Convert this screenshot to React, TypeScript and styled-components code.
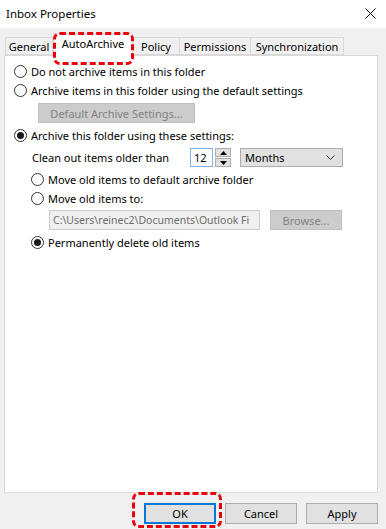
import React from 'react'
import styled, { createGlobalStyle } from 'styled-components'

const GlobalStyle = createGlobalStyle`
  html, body {
    margin: 0;
    padding: 0;
    background: #f0f0f0;
  }
  body {
    font-family: 'Noto Sans', 'Open Sans', sans-serif;
    font-size: 11px;
    color: #000;
  }
`

const tabs = [
  { label: 'General', width: 48 },
  { label: 'AutoArchive', width: 80 },
  { label: 'Policy', width: 47 },
  { label: 'Permissions', width: 71 },
  { label: 'Synchronization', width: 93 },
]

const Radio = ({ checked, label }: { checked?: boolean; label: string }) => (
  <RadioRow>
    <RadioCircle checked={checked} />
    <span>{label}</span>
  </RadioRow>
)

export default function App() {
  return (
    <Window>
      <GlobalStyle />
      <TitleBar>
        <Title>Inbox Properties</Title>
        <svg width="11" height="11" viewBox="0 0 11 11">
          <path d="M0.5 0.5 L10.5 10.5 M10.5 0.5 L0.5 10.5" stroke="#000" strokeWidth="1" />
        </svg>
      </TitleBar>

      <Body>
        <TabStrip>
          {tabs.map((t) => (
            <Tab key={t.label} width={t.width} active={t.label === 'AutoArchive'}>
              {t.label}
            </Tab>
          ))}
          <Highlight style={{ left: 49, top: -5, width: 81, height: 33 }} />
        </TabStrip>

        <Panel>
          <Radio label="Do not archive items in this folder" />
          <Radio label="Archive items in this folder using the default settings" />
          <DisabledButton>Default Archive Settings...</DisabledButton>
          <Radio checked label="Archive this folder using these settings:" />

          <Indent>
            <CleanRow>
              <CleanLabel>Clean out items older than</CleanLabel>
              <Spin>
                <SpinInput>12</SpinInput>
                <SpinButtons>
                  <SpinButton>
                    <svg width="7" height="4" viewBox="0 0 7 4">
                      <path d="M0 4 L3.5 0 L7 4 Z" fill="#000" />
                    </svg>
                  </SpinButton>
                  <SpinButton>
                    <svg width="7" height="4" viewBox="0 0 7 4">
                      <path d="M0 0 L3.5 4 L7 0 Z" fill="#000" />
                    </svg>
                  </SpinButton>
                </SpinButtons>
              </Spin>
              <Select>
                <span>Months</span>
                <svg width="9" height="5" viewBox="0 0 9 5">
                  <path d="M0.5 0.5 L4.5 4.5 L8.5 0.5" fill="none" stroke="#333" strokeWidth="1" />
                </svg>
              </Select>
            </CleanRow>
            <Radio label="Move old items to default archive folder" />
            <Radio label="Move old items to:" />
            <PathRow>
              <PathInput>
                <PathText>C:\Users\reinec2\Documents\Outlook Fi</PathText>
              </PathInput>
              <BrowseButton>Browse...</BrowseButton>
            </PathRow>
            <Radio checked label="Permanently delete old items" />
          </Indent>
        </Panel>

        <Footer>
          <OkWrap>
            <Button primary>OK</Button>
            <Highlight style={{ left: -12, top: -11, width: 90, height: 36 }} />
          </OkWrap>
          <Button>Cancel</Button>
          <Button>Apply</Button>
        </Footer>
      </Body>
    </Window>
  )
}

const Window = styled.div`
  width: 386px;
  height: 529px;
  background: #f0f0f0;
  overflow: hidden;
`

const TitleBar = styled.div`
  height: 28px;
  background: #fff;
  display: flex;
  align-items: center;
  justify-content: space-between;
  padding: 0 10px 2px 6px;
  box-sizing: border-box;
`

const Title = styled.div`
  font-size: 11.5px;
`

const Body = styled.div`
  padding: 9px 8px 0 4px;
`

const TabStrip = styled.div`
  position: relative;
  display: flex;
  align-items: flex-end;
  height: 18px;
  padding-left: 1px;
`

const Tab = styled.div<{ active?: boolean; width: number }>`
  width: ${(p) => p.width}px;
  height: ${(p) => (p.active ? 23 : 18)}px;
  margin-bottom: ${(p) => (p.active ? -1 : 0)}px;
  box-sizing: border-box;
  display: flex;
  align-items: center;
  justify-content: center;
  padding-bottom: ${(p) => (p.active ? 4 : 0)}px;
  border: 1px solid #d9d9d9;
  border-left: ${(p) => (p.active ? '1px solid #d9d9d9' : 'none')};
  border-bottom: ${(p) => (p.active ? 'none' : '1px solid #d9d9d9')};
  background: ${(p) => (p.active ? '#fff' : '#f0f0f0')};
  position: relative;
  z-index: ${(p) => (p.active ? 2 : 1)};
  white-space: nowrap;

  &:first-child {
    border-left: 1px solid #d9d9d9;
  }
`

const Highlight = styled.div`
  position: absolute;
  border: 3px dashed #e8000b;
  border-radius: 7px;
  box-sizing: border-box;
  z-index: 5;
  pointer-events: none;
`

const Panel = styled.div`
  height: 438px;
  box-sizing: border-box;
  background: #fff;
  border: 1px solid #d9d9d9;
  padding: 6px 0 0 9px;
  display: flex;
  flex-direction: column;
  align-items: flex-start;
`

const RadioRow = styled.div`
  height: 19px;
  display: flex;
  align-items: center;
  gap: 4px;
  white-space: nowrap;
`

const RadioCircle = styled.span<{ checked?: boolean }>`
  width: 13px;
  height: 13px;
  box-sizing: border-box;
  border-radius: 50%;
  border: 1px solid #333;
  background: #fff;
  position: relative;
  flex: none;

  &::after {
    content: '';
    display: ${(p) => (p.checked ? 'block' : 'none')};
    position: absolute;
    left: 2px;
    top: 2px;
    width: 7px;
    height: 7px;
    border-radius: 50%;
    background: #1a1a1a;
  }
`

const DisabledButton = styled.div`
  margin: 3px 0 3px 24px;
  width: 157px;
  height: 20px;
  box-sizing: border-box;
  background: #cccccc;
  border: 1px solid #bfbfbf;
  color: #838383;
  display: flex;
  align-items: center;
  justify-content: center;
`

const Indent = styled.div`
  margin-left: 17px;
  display: flex;
  flex-direction: column;
  align-items: flex-start;
`

const CleanRow = styled.div`
  display: flex;
  align-items: center;
  height: 19px;
  margin: 3px 0 3px 1px;
`

const CleanLabel = styled.span`
  width: 158px;
`

const Spin = styled.div`
  display: flex;
  align-items: center;
  gap: 2px;
  margin-right: 9px;
`

const SpinInput = styled.div`
  width: 23px;
  height: 19px;
  box-sizing: border-box;
  border: 1px solid #7eb4ea;
  background: #fff;
  display: flex;
  align-items: center;
  padding-left: 3px;
`

const SpinButtons = styled.div`
  display: flex;
  flex-direction: column;
  gap: 1px;
`

const SpinButton = styled.div`
  width: 16px;
  height: 9px;
  box-sizing: border-box;
  border: 1px solid #adadad;
  background: #e1e1e1;
  display: flex;
  align-items: center;
  justify-content: center;
`

const Select = styled.div`
  width: 103px;
  height: 19px;
  box-sizing: border-box;
  border: 1px solid #adadad;
  background: #e1e1e1;
  display: flex;
  align-items: center;
  justify-content: space-between;
  padding: 0 7px 0 4px;
`

const PathRow = styled.div`
  display: flex;
  align-items: center;
  gap: 10px;
  margin: 2px 0 3px 18px;
`

const PathInput = styled.div`
  width: 211px;
  height: 20px;
  box-sizing: border-box;
  border: 1px solid #cccccc;
  background: #f0f0f0;
  color: #6d6d6d;
  display: flex;
  align-items: center;
  padding-left: 3px;
  overflow: hidden;
  white-space: nowrap;
`

const PathText = styled.span`
  font-size: 10.5px;
`

const BrowseButton = styled.div`
  width: 72px;
  height: 20px;
  box-sizing: border-box;
  background: #cccccc;
  border: 1px solid #bfbfbf;
  color: #838383;
  display: flex;
  align-items: center;
  justify-content: center;
`

const Footer = styled.div`
  display: flex;
  justify-content: flex-end;
  gap: 9px;
  margin-top: 10px;
`

const OkWrap = styled.div`
  position: relative;
  display: flex;
`

const Button = styled.div<{ primary?: boolean }>`
  width: 72px;
  height: 21px;
  box-sizing: border-box;
  background: #e1e1e1;
  border: ${(p) => (p.primary ? '2px solid #0078d7' : '1px solid #adadad')};
  display: flex;
  align-items: center;
  justify-content: center;
`
